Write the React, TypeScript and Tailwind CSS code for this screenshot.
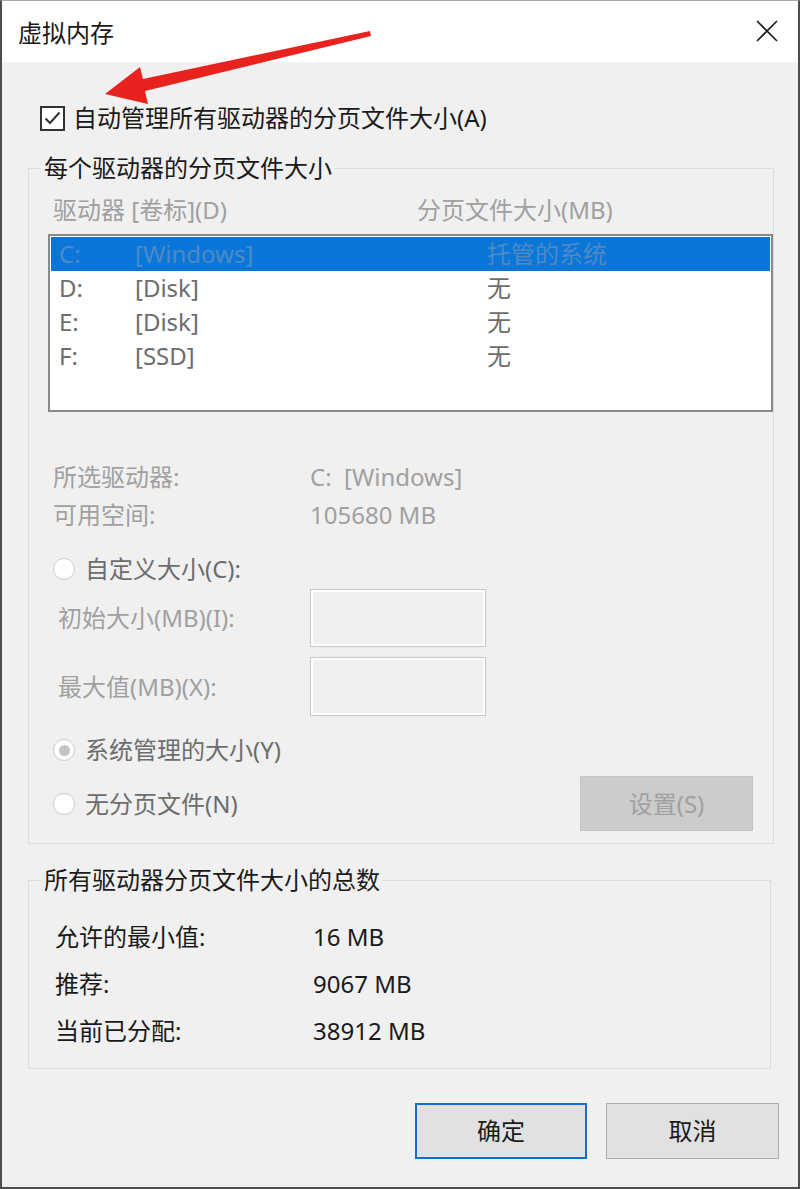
import React from 'react';

const font = { fontFamily: '"Noto Sans", "Noto Sans CJK SC", sans-serif' };

const drives = [
  { letter: 'C:', label: '[Windows]', size: '托管的系统', selected: true },
  { letter: 'D:', label: '[Disk]', size: '无', selected: false },
  { letter: 'E:', label: '[Disk]', size: '无', selected: false },
  { letter: 'F:', label: '[SSD]', size: '无', selected: false },
];

const totals = [
  { label: '允许的最小值:', value: '16 MB' },
  { label: '推荐:', value: '9067 MB' },
  { label: '当前已分配:', value: '38912 MB' },
];

const Radio: React.FC<{ checked?: boolean; label: string }> = ({ checked, label }) => (
  <div className="flex items-center gap-[10px]">
    <span className="w-[22px] h-[22px] rounded-full border border-[#cacaca] bg-white flex items-center justify-center">
      {checked && <span className="w-[11px] h-[11px] rounded-full bg-[#c4c4c4]" />}
    </span>
    <span className="text-[#6d6d6d]">{label}</span>
  </div>
);

const Arrow = () => (
  <svg className="absolute left-0 top-0 pointer-events-none" width="800" height="140" viewBox="0 0 800 140">
    <polygon
      points="103,93 138,66 141,78 368,30 369,35 143,90 146,103"
      fill="#e8231f"
    />
  </svg>
);

const App: React.FC = () => {
  return (
    <div
      className="relative w-[800px] h-[1189px] bg-[#f0f0f0] border-x-2 border-b-2 border-t border-[#4d4d4d] border-t-[#a8a8a8] flex flex-col text-[24px] text-[#1a1a1a]"
      style={font}
    >
      {/* title bar */}
      <div className="h-[61px] bg-white flex items-center justify-between pl-[16px] pr-[20px]">
        <span className="leading-[30px] mt-[2px]">虚拟内存</span>
        <svg width="22" height="22" viewBox="0 0 22 22" className="mt-[-2px]">
          <path d="M1 1 L21 21 M21 1 L1 21" stroke="#1a1a1a" strokeWidth="1.6" />
        </svg>
      </div>

      {/* auto manage checkbox */}
      <div className="flex items-center gap-[8px] pl-[38px] mt-[42px] h-[28px]">
        <span className="w-[25px] h-[25px] border-2 border-[#333333] bg-white flex items-center justify-center">
          <svg width="17" height="14" viewBox="0 0 17 14">
            <path d="M1.5 7.5 L6 12 L15.5 1.5" fill="none" stroke="#333333" strokeWidth="2" />
          </svg>
        </span>
        <span className="leading-[28px]">自动管理所有驱动器的分页文件大小(A)</span>
      </div>

      {/* per-drive group */}
      <fieldset className="ml-[26px] w-[743px] mt-[19px] border border-[#dcdcdc] pb-[12px]">
        <legend className="ml-[12px] px-[3px] leading-[34px]">每个驱动器的分页文件大小</legend>

        <div className="flex pl-[24px] mt-[10px] leading-[30px] text-[#a0a0a0]">
          <span className="w-[364px]">驱动器 [卷标](D)</span>
          <span>分页文件大小(MB)</span>
        </div>

        <div className="ml-[19px] w-[725px] h-[178px] mt-[9px] border-2 border-[#8a8a8a] bg-white p-px">
          {drives.map((d) => (
            <div
              key={d.letter}
              className={`flex h-[34px] items-center pl-[8px] ${d.selected ? 'bg-[#0a77d8] text-[#4f89c6]' : 'text-[#6d6d6d]'}`}
            >
              <span className="w-[76px]">{d.letter}</span>
              <span className="w-[352px]">{d.label}</span>
              <span>{d.size}</span>
            </div>
          ))}
        </div>

        <div className="pl-[24px] mt-[46px] text-[#a0a0a0]">
          <div className="flex h-[38px] items-center">
            <span className="w-[257px]">所选驱动器:</span>
            <span>C:&nbsp;&nbsp;[Windows]</span>
          </div>
          <div className="flex h-[38px] items-center">
            <span className="w-[257px]">可用空间:</span>
            <span>105680 MB</span>
          </div>
        </div>

        <div className="pl-[24px] mt-[16px] h-[38px] flex items-center">
          <Radio label="自定义大小(C):" />
        </div>

        <div className="pl-[29px] flex items-center h-[58px] mt-[1px] text-[#a0a0a0]">
          <span className="w-[252px]">初始大小(MB)(I):</span>
          <span className="w-[176px] h-[58px] border border-[#c8c8c8] shadow-[inset_0_0_0_2px_#ffffff]" />
        </div>
        <div className="pl-[29px] flex items-center h-[59px] mt-[10px] text-[#a0a0a0]">
          <span className="w-[252px]">最大值(MB)(X):</span>
          <span className="w-[176px] h-[59px] border border-[#c8c8c8] shadow-[inset_0_0_0_2px_#ffffff]" />
        </div>

        <div className="pl-[24px] mt-[15px] h-[38px] flex items-center">
          <Radio checked label="系统管理的大小(Y)" />
        </div>

        <div className="pl-[24px] pr-[16px] mt-[7px] h-[55px] flex items-center justify-between">
          <Radio label="无分页文件(N)" />
          <button className="w-[173px] h-[55px] mr-[4px] bg-[#cccccc] border border-[#c4c4c4] text-[#a0a0a0]">设置(S)</button>
        </div>
      </fieldset>

      {/* totals group */}
      <fieldset className="ml-[26px] w-[743px] mt-[19px] border border-[#dcdcdc] pb-[14px]">
        <legend className="ml-[12px] px-[3px] leading-[34px]">所有驱动器分页文件大小的总数</legend>
        <div className="mt-[16px] pl-[26px]">
          {totals.map((t) => (
            <div key={t.label} className="flex h-[47px] items-center">
              <span className="w-[258px]">{t.label}</span>
              <span>{t.value}</span>
            </div>
          ))}
        </div>
      </fieldset>

      {/* dialog buttons */}
      <div className="flex justify-end gap-[19px] pr-[19px] mt-[34px]">
        <button className="w-[172px] h-[56px] bg-[#e1e1e1] border-2 border-[#0a6fd0]">确定</button>
        <button className="w-[173px] h-[56px] bg-[#e1e1e1] border border-[#adadad]">取消</button>
      </div>

      <Arrow />
    </div>
  );
};

export default App;
